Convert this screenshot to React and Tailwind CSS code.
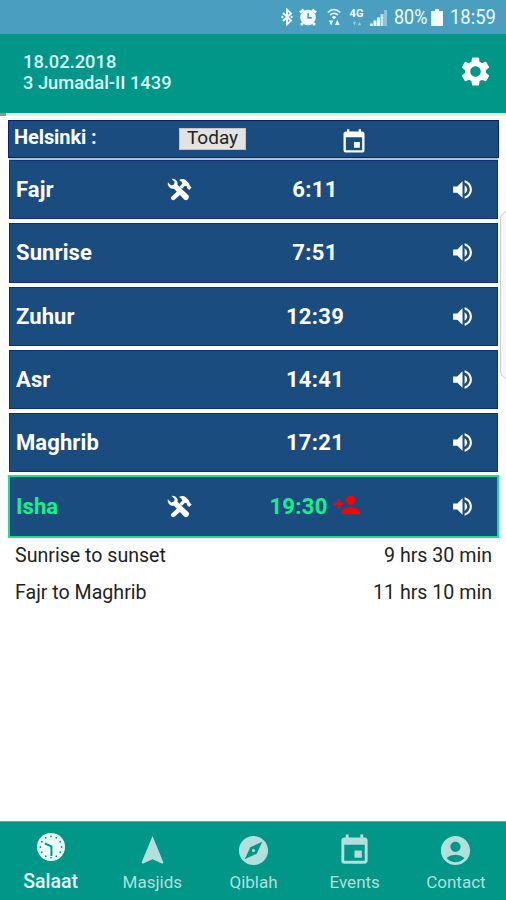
import {
  MdAccountCircle,
  MdEvent,
  MdExplore,
  MdNavigation,
  MdPersonAdd,
  MdSettings,
  MdVolumeUp,
} from "react-icons/md";

const prayers = [
  { name: "Fajr", time: "6:11", adjusted: true },
  { name: "Sunrise", time: "7:51" },
  { name: "Zuhur", time: "12:39" },
  { name: "Asr", time: "14:41" },
  { name: "Maghrib", time: "17:21" },
  { name: "Isha", time: "19:30", adjusted: true, current: true },
];

const tabs = [
  { label: "Salaat", icon: ClockIcon, active: true },
  { label: "Masjids", icon: MdNavigation },
  { label: "Qiblah", icon: MdExplore },
  { label: "Events", icon: MdEvent },
  { label: "Contact", icon: MdAccountCircle },
];

function ClockIcon({ className }) {
  return (
    <svg viewBox="0 0 28 28" className={className}>
      <circle cx="14" cy="14" r="14" fill="currentColor" />
      {[0, 30, 60, 90, 120, 150, 180, 210, 240, 270, 300, 330].map((a) => (
        <circle
          key={a}
          cx="14"
          cy="3.4"
          r="0.9"
          fill="#1c8d84"
          transform={`rotate(${a} 14 14)`}
        />
      ))}
      <path
        d="M7.8 10.4 L14.4 13.4 V23"
        fill="none"
        stroke="#009688"
        strokeWidth="2"
      />
    </svg>
  );
}

function ToolsIcon() {
  return (
    <svg viewBox="0 0 25 23" className="h-[23px] w-[25px]" fill="white">
      <path d="M11 12.6 L14.4 15.8 L7.2 22 Q5.8 22.6 4.6 21.4 Q3.2 20 4.4 18.8 Z" />
      <path d="M12 2 Q15.8 .2 18.6 2 L22 5.4 L22.8 7.8 L24.7 9.6 L22.2 12 L20 10 L19.8 8.2 L17.9 7.7 L15 10.8 L12.4 8.8 L15.4 5.6 Q15 3.2 12 2 Z" />
      <path d="M4.6 .8 Q8.4 .2 10.2 3.4 Q11 5 10.4 6.8 L21.6 17.6 Q22.7 19.4 21 21.2 Q19.2 22.9 17.2 21.5 L7 10.7 Q4.4 11.4 2.2 9.2 Q.2 7 .8 4.2 L4.2 7.4 L7 6.6 L7.7 4 Z" />
    </svg>
  );
}

function StatusBar() {
  return (
    <div className="flex h-[34px] shrink-0 items-center justify-end bg-[#4a9fc0] pr-[10px] text-[#f2fbff]">
      <svg viewBox="0 0 12 18" className="mr-[6px] h-[18px] w-[12px]">
        <path
          d="M2 5 L10 12.6 L6 16.4 V1.6 L10 5.4 L2 13"
          fill="none"
          stroke="currentColor"
          strokeWidth="1.9"
        />
        <path d="M0 9 l1.4 -1.4 L2.8 9 l-1.4 1.4 Z M9.2 9 l1.4 -1.4 L12 9 l-1.4 1.4 Z" fill="currentColor" />
      </svg>
      <svg viewBox="0 0 18 18" className="mr-[10px] h-[18px] w-[18px]">
        <circle cx="9" cy="9.6" r="7.8" fill="currentColor" />
        <path
          d="M1 4.6 L4.8 1.4 M17 4.6 L13.2 1.4 M4 15 L2 17 M14 15 L16 17"
          stroke="currentColor"
          strokeWidth="2.6"
        />
        <path d="M9.2 5.2 V9.8 H12.8" fill="none" stroke="#4a9fc0" strokeWidth="1.7" />
      </svg>
      <svg
        viewBox="0 0 14 18"
        className="mr-[8px] h-[18px] w-[14px]"
        fill="none"
        stroke="currentColor"
      >
        <path d="M.8 4.6 Q7 -1.4 13.2 4.6" strokeWidth="1.4" />
        <path d="M3 7 Q7 3.4 11 7" strokeWidth="1.4" />
        <path d="M5 9.2 Q7 7.4 9 9.2 L7 11 Z" fill="currentColor" strokeWidth=".6" />
        <path
          d="M1.8 12.4 H6.4 L4.1 17.4 Z M8 17 H12.6 L10.3 11.8 Z"
          fill="currentColor"
          stroke="none"
        />
      </svg>
      <div className="mr-[6px] flex h-[17px] w-[15px] flex-col items-center">
        <span className="text-[11px] leading-[10px] font-bold">4G</span>
        <svg viewBox="0 0 12 6" className="mt-[2px] h-[5px] w-[10px] opacity-50" fill="currentColor">
          <path d="M1 1 H5 L3 5 Z M7 5 H11 L9 1 Z" />
        </svg>
      </div>
      <svg viewBox="0 0 17 17" className="mr-[7px] h-[17px] w-[17px]" fill="currentColor">
        <path d="M0 14.5 h2.8 V17 H0 Z M3.5 11.5 h3 V17 h-3 Z M7 8.5 h3 V17 H7 Z" />
        <path d="M10.5 5 h3 V17 h-3 Z" opacity=".75" />
        <path d="M14 1 h3 V17 h-3 Z" opacity=".4" />
      </svg>
      <span className="mr-[3px] w-[34px] origin-left scale-x-[.9] text-[20px] leading-none whitespace-nowrap">
        80%
      </span>
      <svg viewBox="0 0 12 17" className="mr-[7px] h-[17px] w-[12px]" fill="currentColor">
        <path d="M4 0 h4 v2 h4 v15 H0 V2 h4 Z" />
      </svg>
      <span className="w-[46px] origin-left scale-x-[.92] text-[20px] leading-none whitespace-nowrap">
        18:59
      </span>
    </div>
  );
}

function Header() {
  return (
    <header className="flex h-[79px] shrink-0 items-center justify-between bg-[#009688] pr-[13px] pl-[23px] text-white">
      <div className="mb-[4px] text-[18.3px] leading-[21px] font-medium text-[#d9fffa]">
        <div>18.02.2018</div>
        <div>3 Jumadal-II 1439</div>
      </div>
      <MdSettings className="mb-[4px] h-[35px] w-[35px]" />
    </header>
  );
}

function PrayerRow({ prayer }) {
  return (
    <div
      className={
        prayer.current
          ? "-mx-px -mt-px flex h-[63px] items-center border-2 border-[#1fd996] bg-[#1a4c7f] pr-[22px] pl-[6px] text-[#14f08c]"
          : "flex h-[59.3px] items-center border border-[#122f7c] bg-[#1a4c7f] pr-[22px] pl-[6px] text-white"
      }
    >
      <div className="w-[151px] text-[22px] font-bold tracking-[0.1px]">
        {prayer.name}
      </div>
      <div className="w-[25px]">{prayer.adjusted && <ToolsIcon />}</div>
      <div className="flex flex-1 items-center justify-center pr-[12px] text-[22px] font-bold tracking-[0.3px]">
        {prayer.time}
        {prayer.current && (
          <MdPersonAdd className="mb-[3px] ml-[5px] h-[28px] w-[28px] text-[#f60404]" />
        )}
      </div>
      <MdVolumeUp className="h-[25px] w-[25px] text-white" />
    </div>
  );
}

export default function App() {
  return (
    <div className="flex h-[900px] w-[506px] flex-col overflow-hidden bg-white font-['Roboto',sans-serif]">
      <StatusBar />
      <Header />
      <div className="flex h-[3px] shrink-0 bg-[#e9e9e4]">
        <div className="w-[6px] bg-[#8e9390]" />
      </div>

      <main className="relative flex-1 pt-1">
        <div className="mr-[7px] ml-2 flex h-[38px] items-center border border-[#0c1f70] bg-[#1a4c7f] pl-[5px] text-white">
          <div className="w-[165px] pb-1 text-[20px] font-bold tracking-[-0.1px]">
            Helsinki :
          </div>
          <button className="h-[22px] w-[67px] border border-[#c4c4c4] bg-[#e2e2e2] text-[19px] leading-[16px] text-[#222]">
            <span className="relative -top-px">Today</span>
          </button>
          <MdEvent className="mt-[5px] ml-[94px] h-7 w-7" />
        </div>
        <div className="mr-2 ml-[9px] h-[2px] bg-[#b4bfcc]" />
        <div className="mr-2 ml-[9px] flex flex-col gap-1">
          {prayers.map((prayer) => (
            <PrayerRow key={prayer.name} prayer={prayer} />
          ))}
        </div>
        <div className="pr-[14px] pl-[15px] text-[19.6px] leading-[36.5px] text-[#222]">
          <div className="flex justify-between">
            <span>Sunrise to sunset</span>
            <span>9 hrs 30 min</span>
          </div>
          <div className="flex justify-between">
            <span>Fajr to Maghrib</span>
            <span>11 hrs 10 min</span>
          </div>
        </div>

        <div className="absolute top-[95px] -right-[6px] h-[168px] w-[12px] rounded-l-[8px] border border-[#c9ccca] bg-[#f8f8f8]" />
      </main>

      <nav className="flex h-[79px] shrink-0 border-t border-[#5fa9a0] bg-[#009688]">
        {tabs.map(({ label, icon: Icon, active }) => (
          <div
            key={label}
            className={
              active
                ? "flex flex-1 flex-col items-center pt-[11px] text-[#e8fffc]"
                : "flex flex-1 flex-col items-center pt-[11px] text-[#b2dfdb]"
            }
          >
            <Icon className={active ? "h-7 w-7" : "ml-px h-[35px] w-[35px]"} />
            <span
              className={
                active
                  ? "mt-[9px] text-[19.5px] leading-6 font-medium"
                  : "ml-px mt-[2px] text-[17px] leading-6"
              }
            >
              {label}
            </span>
          </div>
        ))}
      </nav>
    </div>
  );
}
